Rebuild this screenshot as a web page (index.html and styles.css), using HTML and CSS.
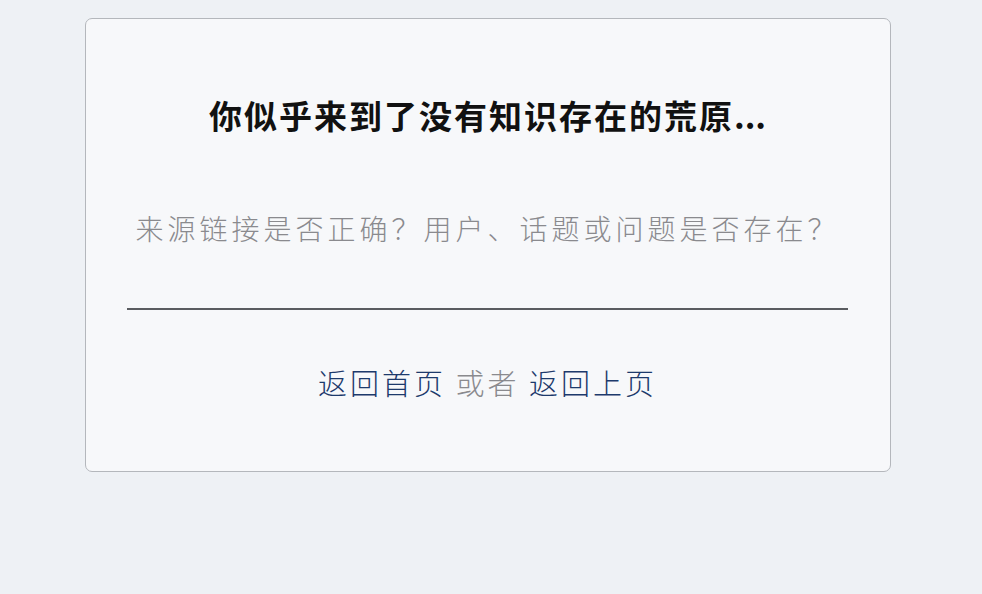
FILE: index.html
```html
<!DOCTYPE html>
<html lang="zh-CN">

<head>
    <meta charset="UTF-8">
    <meta name="viewport" content="width=device-width, initial-scale=1.0">
    <title>页面不存在</title>
    <link rel="stylesheet" href="styles.css">
</head>

<body>
    <div class="card">
        <h1 class="title">你似乎来到了没有知识存在的荒原<span class="dots">...</span></h1>
        <p class="hint">来源链接是否正确？用户、话题或问题是否存在？</p>
        <hr class="divider">
        <div class="links">
            <a href="#">返回首页</a>
            <span class="or">或者</span>
            <a href="#">返回上页</a>
        </div>
    </div>
</body>

</html>
```

FILE: styles.css
```css
body {
    margin: 0;
    padding-top: 18px;
    background-color: #eef1f5;
    font-family: "Noto Sans CJK SC", "Noto Sans", sans-serif;
}

.card {
    box-sizing: border-box;
    width: 806px;
    height: 454px;
    margin-left: 85px;
    padding: 76px 42px 0 41px;
    background-color: #f7f8fa;
    border: 1px solid #b4b7bc;
    border-radius: 7px;
    display: flex;
    flex-direction: column;
    align-items: center;
}

.title {
    margin: 0;
    font-size: 33px;
    line-height: 40px;
    font-weight: 700;
    letter-spacing: 2px;
    color: #111;
}

.title .dots {
    letter-spacing: 0;
}

.hint {
    margin: 73px 0 0;
    font-size: 28px;
    line-height: 40px;
    font-weight: 300;
    letter-spacing: 4px;
    color: #8a8a8e;
}

.divider {
    width: 100%;
    margin: 60px 0 0;
    border: 0;
    border-top: 2px solid #5a5c60;
}

.links {
    margin-top: 52px;
    font-size: 29px;
    line-height: 40px;
    font-weight: 300;
    letter-spacing: 3px;
}

.links a {
    color: #1d3a6c;
    text-decoration: none;
}

.links .or {
    color: #8a8a8e;
}
```
